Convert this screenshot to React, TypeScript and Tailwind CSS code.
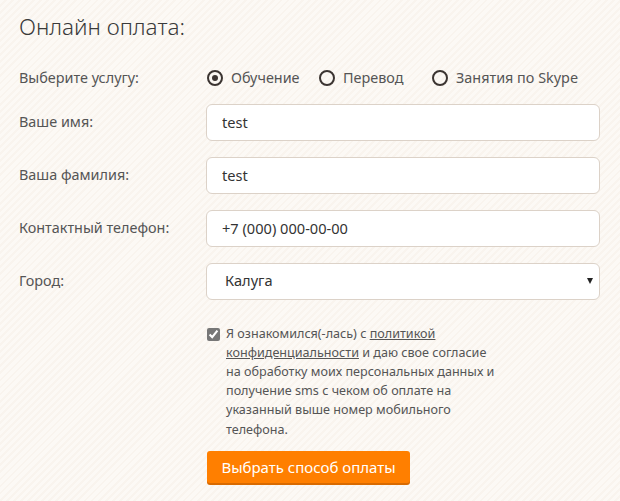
import { useState } from "react";

const services = ["Обучение", "Перевод", "Занятия по Skype"];

function Radio({ label, checked, onClick }: { label: string; checked: boolean; onClick: () => void }) {
  return (
    <button type="button" onClick={onClick} className="flex items-center gap-[8px] text-[14.4px] text-[#555]">
      <span className="flex h-[16px] w-[16px] items-center justify-center rounded-full border-2 border-[#3b3431]">
        {checked && <span className="h-[6px] w-[6px] rounded-full bg-[#3b3431]" />}
      </span>
      {label}
    </button>
  );
}

function Field({ label, value }: { label: string; value: string }) {
  return (
    <div className="flex items-center">
      <label className="w-[187px] shrink-0 text-[14.4px] text-[#555]">{label}</label>
      <input
        defaultValue={value}
        className="h-[37px] w-[394px] rounded-[6px] border border-[#dcd2c8] bg-white px-[15px] text-[14.6px] text-[#333] outline-none"
      />
    </div>
  );
}

export default function App() {
  const [service, setService] = useState(0);

  return (
    <div
      className="min-h-[501px] w-[620px] bg-[repeating-linear-gradient(135deg,#fcf9f5_0px,#fcf9f5_3px,#f9f4ee_3px,#f9f4ee_5px)] px-[19px] pt-[11px]"
      style={{ fontFamily: '"Noto Sans", "Open Sans", sans-serif' }}
    >
      <h1 className="text-[22.5px] font-light leading-[32px] text-[#3a3a3a]">Онлайн оплата:</h1>

      <div className="mt-[24px] flex items-center">
        <span className="w-[188px] shrink-0 text-[14.4px] text-[#555]">Выберите услугу:</span>
        <div className="flex items-center">
          <div className="w-[112px]">
            <Radio label={services[0]} checked={service === 0} onClick={() => setService(0)} />
          </div>
          <div className="w-[113px]">
            <Radio label={services[1]} checked={service === 1} onClick={() => setService(1)} />
          </div>
          <Radio label={services[2]} checked={service === 2} onClick={() => setService(2)} />
        </div>
      </div>

      <div className="mt-[15px] flex flex-col gap-[16px]">
        <Field label="Ваше имя:" value="test" />
        <Field label="Ваша фамилия:" value="test" />
        <Field label="Контактный телефон:" value="+7 (000) 000-00-00" />
        <div className="flex items-center">
          <label className="w-[187px] shrink-0 text-[14.4px] text-[#555]">Город:</label>
          <div className="relative w-[394px]">
            <select className="h-[37px] w-full appearance-none rounded-[6px] border border-[#dcd2c8] bg-white pl-[18px] text-[14.6px] text-[#333] outline-none">
              <option>Калуга</option>
            </select>
            <span className="pointer-events-none absolute right-[7px] top-[15px] h-0 w-0 border-x-[3.5px] border-t-[6px] border-x-transparent border-t-[#222]" />
          </div>
        </div>
      </div>

      <div className="ml-[188px] mt-[24px] flex gap-[6px]">
        <input type="checkbox" defaultChecked className="mt-[4px] h-[13px] w-[13px] shrink-0 accent-[#777]" />
        <p className="w-[300px] whitespace-nowrap text-[12.6px] leading-[19.2px] text-[#555]">
          Я ознакомился(-лась) с{" "}
          <a href="#" className="underline">
            политикой
            <br />
            конфиденциальности
          </a>{" "}
          и даю свое согласие
          <br />
          на обработку моих персональных данных и
          <br />
          получение sms с чеком об оплате на
          <br />
          указанный выше номер мобильного
          <br />
          телефона.
        </p>
      </div>

      <button
        type="button"
        className="ml-[188px] mt-[12px] h-[32px] w-[203px] rounded-[3px] bg-[#ff7f00] text-[15px] text-white shadow-[0_2px_0_#d96a00]"
      >
        Выбрать способ оплаты
      </button>
    </div>
  );
}
